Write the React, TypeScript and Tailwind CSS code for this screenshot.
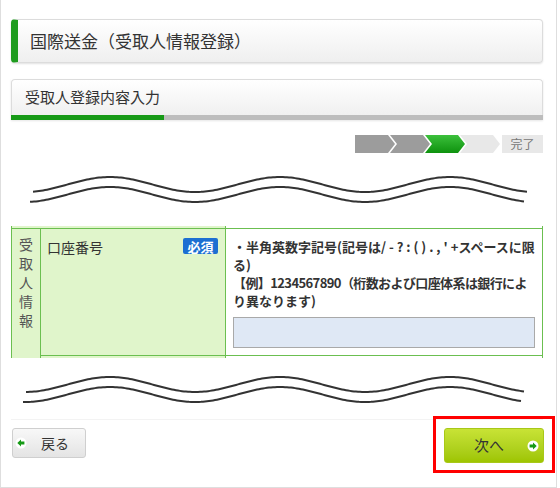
import React from 'react';

// sine-ish cut line used to show the page is abbreviated
const wavePath = (x0: number, x1: number, cy: number) => {
  const pts: string[] = [];
  for (let x = x0; x <= x1; x += 2) {
    const y = cy - 7.5 * Math.cos((2 * Math.PI * (x - 99)) / 170);
    pts.push(`${x},${y.toFixed(2)}`);
  }
  return 'M' + pts.join(' L');
};

const Wave = ({ upper, lower }: { upper: [number, number]; lower: [number, number] }) => (
  <svg width="532" height="40" viewBox="0 0 532 40" className="block">
    <path d={wavePath(upper[0], upper[1], 14.5)} fill="none" stroke="#333" strokeWidth="2" />
    <path d={wavePath(lower[0], lower[1], 24.5)} fill="none" stroke="#333" strokeWidth="2" />
  </svg>
);

const ArrowIcon = ({ dir }: { dir: 'left' | 'right' }) => (
  <svg width="12" height="12" viewBox="0 0 12 12" className="shrink-0">
    <circle cx="6" cy="6" r="5.5" fill="#fff" />
    {dir === 'left' ? (
      <path d="M2.3 6 L6 2.6 L6 4.6 L9.4 4.6 L9.4 7.4 L6 7.4 L6 9.4 Z" fill="#169a16" />
    ) : (
      <path d="M9.7 6 L6 2.6 L6 4.6 L2.6 4.6 L2.6 7.4 L6 7.4 L6 9.4 Z" fill="#169a16" />
    )}
  </svg>
);

const Steps = () => {
  const colors = ['#9c9c9c', '#9c9c9c', 'url(#g)', '#e8e8e8'];
  return (
    <div className="flex h-[18px] justify-end">
      <svg width="145" height="18" viewBox="0 0 145 18">
        <defs>
          <linearGradient id="g" x1="0" y1="0" x2="0" y2="1">
            <stop offset="0" stopColor="#3cc03c" />
            <stop offset="1" stopColor="#0e920e" />
          </linearGradient>
        </defs>
        {colors.map((c, i) => {
          const s = i * 35;
          const pts =
            i === 0
              ? `${s},0 ${s + 33},0 ${s + 40},9 ${s + 33},18 ${s},18`
              : `${s},0 ${s + 33},0 ${s + 40},9 ${s + 33},18 ${s},18 ${s + 7},9`;
          return <polygon key={i} points={pts} fill={c} />;
        })}
      </svg>
      <div className="ml-[2px] flex h-[18px] w-[41px] items-center justify-center bg-[#e8e8e8] text-[12px] text-[#777]">
        完了
      </div>
    </div>
  );
};

export default function App() {
  return (
    <div className="h-[488px] w-[557px] border-x border-b border-[#dedede] bg-white pl-[10px] pr-[13px] pt-[19px] font-['Noto_Sans_CJK_JP',sans-serif] text-[#333]">
      {/* Page title */}
      <div className="flex h-[44px] items-center rounded-[4px] border border-l-[7px] border-[#dcdcdc] border-l-[#1f9c1f] bg-linear-to-b from-white to-[#efefef] pl-[12px] text-[17px] shadow-[0_1px_2px_rgba(0,0,0,0.12)]">
        国際送金（受取人情報登録）
      </div>

      {/* Sub title + progress */}
      <div className="mt-[16px] shadow-[0_1px_2px_rgba(0,0,0,0.1)]">
        <div className="flex h-[36px] items-center rounded-t-[4px] border border-b-0 border-[#dcdcdc] bg-linear-to-b from-white to-[#f0f0f0] pl-[13px] text-[15px]">
          受取人登録内容入力
        </div>
        <div className="flex h-[5px]">
          <div className="w-[153px] bg-[#179a17]" />
          <div className="flex-1 bg-[#bdbdbd]" />
        </div>
      </div>

      <div className="mt-[15px]">
        <Steps />
      </div>

      <div className="mt-[17px]">
        <Wave upper={[22, 517]} lower={[19, 514]} />
      </div>

      {/* Form table (cut) */}
      <div className="mt-[16px] w-[532px] border-x border-[#6bbf50]">
        <div className="flex h-[2px]">
          <div className="w-[214px] shrink-0 border-r border-[#6bbf50] bg-[#e0f5cb]" />
          <div className="min-w-0 flex-1 bg-white" />
        </div>
        <div className="flex border-t border-[#6bbf50]">
          <div className="flex w-[29px] shrink-0 flex-col items-center border-r border-[#6bbf50] bg-[#e0f5cb] pt-[6px] text-[14px] leading-[19px] text-[#555]">
            {'受取人情報'.split('').map((c) => (
              <span key={c}>{c}</span>
            ))}
          </div>
          <div className="flex min-w-0 flex-1 flex-col">
            <div className="flex h-[127px] border-b border-[#6bbf50]">
              <div className="flex w-[185px] shrink-0 items-start justify-between border-r border-[#6bbf50] bg-[#e0f5cb] pl-[6px] pr-[7px] pt-[9px]">
                <span className="text-[14px] leading-[18px]">口座番号</span>
                <span className="flex h-[16px] w-[35px] items-center justify-center rounded-[2px] bg-[#1c6fd2] text-[13px] font-bold leading-none text-white">
                  必須
                </span>
              </div>
              <div className="min-w-0 flex-1 bg-white px-[7px] pt-[9px]">
                <div className="text-[13px] font-bold leading-[18px]">
                  <div className="whitespace-nowrap">・半角英数字記号(記号は/ - ? : ( ) . , ' +スペースに限</div>
                  <div className="whitespace-nowrap">る)</div>
                  <div className="whitespace-nowrap tracking-[-0.6px]">【例】1234567890（桁数および口座体系は銀行によ</div>
                  <div className="whitespace-nowrap">り異なります)</div>
                </div>
                <div className="mt-[7px] h-[31px] w-full border border-[#a9a9a9] bg-[#dfe8f5]" />
              </div>
            </div>
            <div className="flex h-[2px]">
              <div className="w-[185px] shrink-0 border-r border-[#6bbf50] bg-[#e0f5cb]" />
              <div className="min-w-0 flex-1 bg-white" />
            </div>
          </div>
        </div>
      </div>

      <div className="mt-[12px]">
        <Wave upper={[15, 514]} lower={[12, 511]} />
      </div>
      <div className="mt-[9px] h-px bg-[#f3f3f3]" />

      {/* Buttons */}
      <div className="mt-[8px] flex items-start justify-between">
        <button className="ml-[1px] flex h-[30px] w-[74px] items-center rounded-[3px] border border-[#cfcfcf] bg-linear-to-b from-[#f8f8f8] to-[#e4e4e4] pl-[2px] text-[14px] text-[#333]">
          <ArrowIcon dir="left" />
          <span className="ml-[14px]">戻る</span>
        </button>
        <div className="relative -mr-px">
          <button className="flex h-[35px] w-[100px] items-center rounded-[3px] border border-[#a8c818] bg-linear-to-b from-[#c8e335] to-[#9ec500] pl-[6px] pr-[4px] text-[15px] text-[#333]">
            <span className="flex-1 text-center">次へ</span>
            <ArrowIcon dir="right" />
          </button>
          <div className="pointer-events-none absolute -bottom-[10px] -left-[11px] -right-[11px] -top-[12px] border-[3px] border-[#ff0000]" />
        </div>
      </div>
    </div>
  );
}
